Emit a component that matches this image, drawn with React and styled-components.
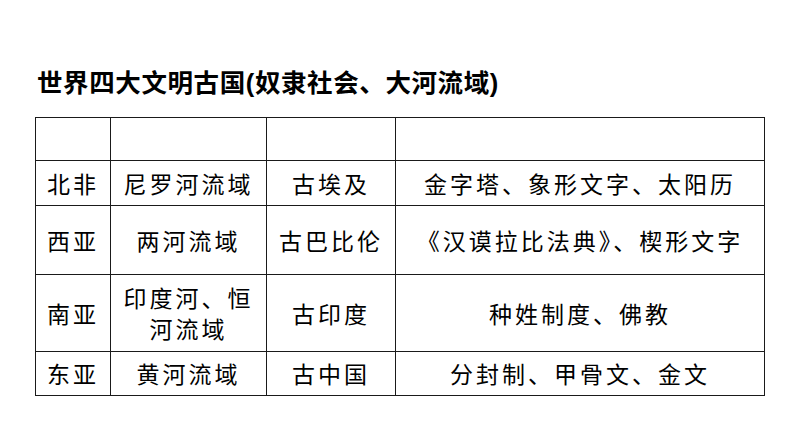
import React from 'react';
import styled, { createGlobalStyle } from 'styled-components';

const Global = createGlobalStyle`
  html, body { margin: 0; padding: 0; background: #fff; }
  body { width: 794px; height: 447px; overflow: hidden; }
`;

const Page = styled.div`
  padding: 68px 0 0 35px;
  font-family: "Noto Sans CJK SC", sans-serif;
  color: #000;
`;

const Title = styled.h1`
  margin: 0 0 18px 2px;
  font-family: "Liberation Sans", "Noto Sans CJK SC", sans-serif;
  font-size: 25.5px;
  line-height: 31px;
  font-weight: bold;
  letter-spacing: 0.6px;
`;

const Table = styled.table`
  border-collapse: collapse;
  table-layout: fixed;
  width: 729px;
`;

const Row = styled.tr`
  height: ${p => p.h}px;
`;

const Cell = styled.td`
  border: 1px solid #1a1a1a;
  padding: 0 4px;
  text-align: center;
  vertical-align: middle;
  font-size: 23px;
  line-height: 31px;
  letter-spacing: 3px;
  font-weight: 400;
  white-space: ${p => (p.wrap ? 'normal' : 'nowrap')};
`;

const cols = [75, 156, 129, 369];

const rows = [
  { h: 43, cells: ['', '', '', ''] },
  { h: 45, cells: ['北非', '尼罗河流域', '古埃及', '金字塔、象形文字、太阳历'] },
  { h: 69, cells: ['西亚', '两河流域', '古巴比伦', '《汉谟拉比法典》、楔形文字'] },
  { h: 77, cells: ['南亚', '印度河、恒河流域', '古印度', '种姓制度、佛教'] },
  { h: 44, cells: ['东亚', '黄河流域', '古中国', '分封制、甲骨文、金文'] },
];

export default function App() {
  return (
    <Page>
      <Global />
      <Title>世界四大文明古国(奴隶社会、大河流域)</Title>
      <Table>
        <colgroup>
          {cols.map((w, i) => <col key={i} style={{ width: w }} />)}
        </colgroup>
        <tbody>
          {rows.map((r, i) => (
            <Row key={i} h={r.h}>
              {r.cells.map((c, j) => (
                <Cell key={j} wrap={j === 1 ? 1 : 0}>{c}</Cell>
              ))}
            </Row>
          ))}
        </tbody>
      </Table>
    </Page>
  );
}
